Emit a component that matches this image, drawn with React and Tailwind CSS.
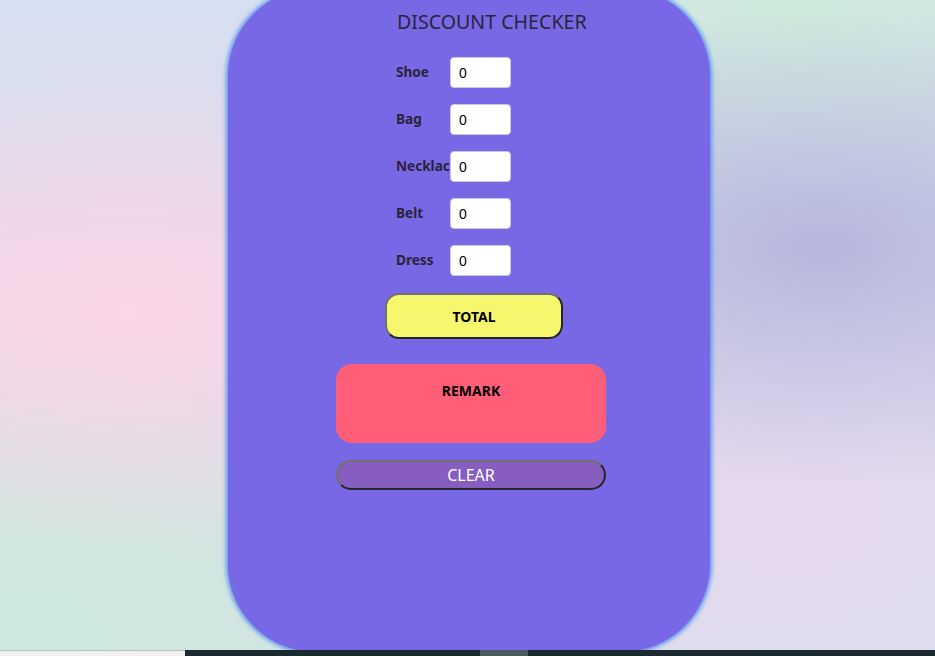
import React, { useState } from 'react';

const items = ['Shoe', 'Bag', 'Necklace', 'Belt', 'Dress'];

const App = () => {
  const [values, setValues] = useState({ Shoe: 0, Bag: 0, Necklace: 0, Belt: 0, Dress: 0 });

  return (
    <div className="h-[656px] w-full flex flex-col overflow-hidden font-['Noto_Sans',sans-serif]">
      {/* page area */}
      <div className="h-[650px] flex justify-center pl-[3px] overflow-hidden bg-[radial-gradient(ellipse_at_14%_48%,#fad6e6_0%,transparent_50%),radial-gradient(ellipse_at_88%_38%,#b6b6df_0%,transparent_42%),radial-gradient(ellipse_at_85%_3%,#cfeadc_0%,transparent_45%),radial-gradient(ellipse_at_3%_97%,#cde8dc_0%,transparent_38%),radial-gradient(ellipse_at_85%_80%,#e6d8ec_0%,transparent_40%),radial-gradient(ellipse_at_98%_98%,#d8e0f4_0%,transparent_40%),linear-gradient(180deg,#d6e0f0_0%,#e4d8ea_50%,#d6e4e6_100%)]">
        <div className="w-[482px] h-[664px] -mt-[12px] shrink-0 rounded-[88px] bg-[#7868e6] shadow-[0_0_4px_2px_#5c93f2] pt-[20px]">
          <h1 className="ml-[169px] text-[19.6px] leading-[27px] text-[#2a2438]">DISCOUNT CHECKER</h1>

          <div className="ml-[168px] mt-[22px] flex flex-col gap-[16px]">
            {items.map((name) => (
              <div key={name} className="flex items-center h-[31px]">
                <span className="w-[54px] whitespace-nowrap text-[13.6px] font-bold text-[#2a2438]">{name}</span>
                <input
                  type="text"
                  value={values[name]}
                  onChange={(e) => setValues({ ...values, [name]: e.target.value })}
                  className="relative w-[61px] h-[31px] bg-white border border-[#c8c8d8] rounded-[4px] pl-[8px] text-[14px] text-black font-['Liberation_Sans',sans-serif] outline-none"
                />
              </div>
            ))}
          </div>

          <button className="ml-[157px] mt-[17px] w-[178px] h-[46px] rounded-[14px] bg-[#f7f76e] border-2 border-t-[#707070] border-l-[#707070] border-r-[#262626] border-b-[#262626] text-[14px] font-bold text-black">
            TOTAL
          </button>

          <div className="ml-[108px] mt-[25px] w-[270px] h-[79px] rounded-[16px] bg-[#ff5e78] pt-[16px] text-center text-[14px] font-bold text-black">
            REMARK
          </div>

          <button className="ml-[108px] mt-[17px] w-[270px] h-[30px] rounded-full bg-[#855ec0] border-2 border-t-[#707070] border-l-[#707070] border-r-[#262626] border-b-[#262626] text-[16px] leading-none text-white">
            CLEAR
          </button>
        </div>
      </div>

      {/* bottom strip */}
      <div className="h-[6px] flex">
        <div className="w-[185px] bg-[#f0f0f0] border-t border-[#c4c4c4]" />
        <div className="flex-1 flex bg-[#1b2a30]">
          <div className="ml-[295px] w-[48px] bg-[#4b5a60]" />
        </div>
      </div>
    </div>
  );
};

export default App;
